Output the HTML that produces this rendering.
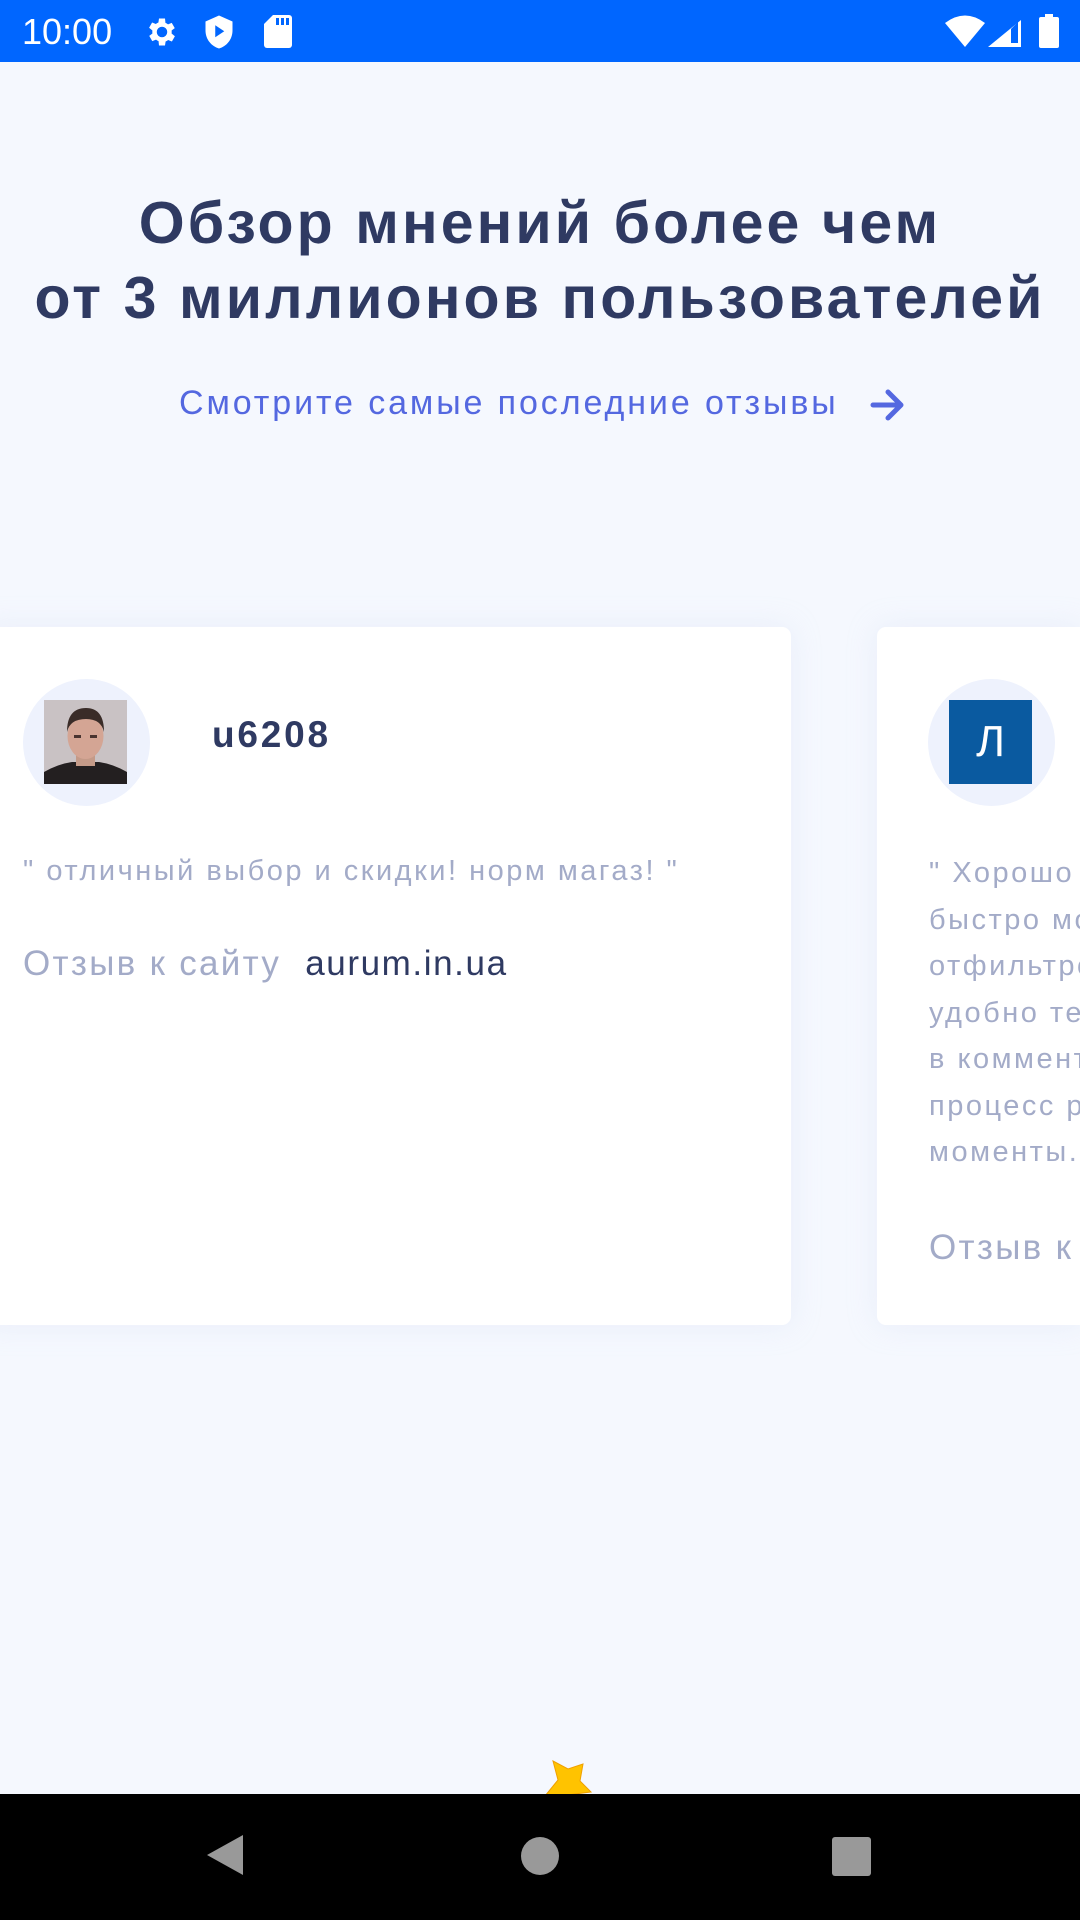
<!DOCTYPE html>
<html><head><meta charset="utf-8"><style>
*{margin:0;padding:0;box-sizing:border-box}
body{width:1080px;height:1920px;overflow:hidden;background:#f5f8fe;font-family:"Liberation Sans",sans-serif;position:relative}
.sb{position:absolute;left:0;top:0;width:1080px;height:62px;background:#0066ff;color:#fff}
.time{position:absolute;left:22px;top:11px;font-size:36px;letter-spacing:0px}
h1{position:absolute;left:0;width:1080px;top:186px;text-align:center;font-size:59px;line-height:75px;font-weight:bold;color:#2f3a62;letter-spacing:3.1px;white-space:nowrap}
.link{position:absolute;left:179px;top:384px;font-size:34px;color:#5468e0;letter-spacing:2.9px;white-space:nowrap}
.card{position:absolute;top:627px;height:698px;background:#fff;border-radius:9px;box-shadow:0 0 30px rgba(200,210,240,0.25);overflow:hidden}
.av{position:absolute;top:679px;width:127px;height:127px;border-radius:50%;background:#eef2fd}
.q{position:absolute;font-size:29px;color:#a3abc8;white-space:nowrap;letter-spacing:2.5px}
.nav{position:absolute;left:0;top:1794px;width:1080px;height:126px;background:#000}
.wrap{position:absolute;left:0;top:0;width:1080px;height:1920px;overflow:hidden}
</style></head><body>
<div class="wrap">
<div class="sb">
<div class="time">10:00</div>
<svg style="position:absolute;left:144px;top:14px" width="36" height="36" viewBox="0 0 24 24"><path fill="#fff" d="M19.4 13a7.5 7.5 0 0 0 0-2l2.1-1.6-2-3.5-2.5 1a7 7 0 0 0-1.7-1L15 3h-4l-.4 2.7a7 7 0 0 0-1.7 1l-2.5-1-2 3.5L6.6 11a7.5 7.5 0 0 0 0 2l-2.1 1.6 2 3.5 2.5-1a7 7 0 0 0 1.7 1L11 21h4l.4-2.7a7 7 0 0 0 1.7-1l2.5 1 2-3.5zM13 15.5a3.5 3.5 0 1 1 0-7 3.5 3.5 0 0 1 0 7z" transform="translate(-1 0)"/></svg>
<svg style="position:absolute;left:203px;top:14px" width="32" height="36" viewBox="0 0 20 24"><path fill="#fff" d="M10 1 1 5v6c0 6 4 10.5 9 12 5-1.5 9-6 9-12V5z"/><path fill="#0066ff" d="M7.5 7.5v8l6-4z"/></svg>
<svg style="position:absolute;left:264px;top:15px" width="28" height="33" viewBox="0 0 28 33"><path fill="#fff" d="M9 0h16a3 3 0 0 1 3 3v27a3 3 0 0 1-3 3H3a3 3 0 0 1-3-3V9z"/><rect x="12" y="3" width="3" height="7" fill="#0066ff"/><rect x="17" y="3" width="3" height="7" fill="#0066ff"/><rect x="22" y="3" width="3" height="7" fill="#0066ff"/></svg>
<svg style="position:absolute;left:945px;top:14px" width="40" height="33" viewBox="0 0 40 33"><path fill="#fff" d="M0 9Q20-6 40 9L20 33z"/></svg>
<svg style="position:absolute;left:988px;top:20px" width="33" height="27" viewBox="0 0 33 27"><path fill="#fff" d="M33 0V27H0z"/><path fill="#0066ff" d="M23 9V23h7V2z"/></svg>
<svg style="position:absolute;left:1039px;top:14px" width="20" height="34" viewBox="0 0 20 34"><rect x="6" y="0" width="8" height="4" fill="#fff"/><rect x="0" y="3" width="20" height="31" rx="2" fill="#fff"/></svg>
</div>
<h1>Обзор мнений более чем<br>от 3 миллионов пользователей</h1>
<div class="link">Смотрите самые последние отзывы</div>
<svg style="position:absolute;left:870px;top:388px" width="36" height="34" viewBox="0 0 36 34"><path d="M3 17h28M18 4l13 13-13 13" stroke="#5468e0" stroke-width="5" fill="none" stroke-linecap="round" stroke-linejoin="round"/></svg>

<div class="card" style="left:-20px;width:811px"></div>
<div class="card" style="left:877px;width:203px;border-radius:9px 0 0 9px"></div>

<div class="av" style="left:23px"></div>
<svg style="position:absolute;left:44px;top:700px" width="83" height="84" viewBox="0 0 83 84"><rect width="83" height="84" fill="#c9c2c4"/><path d="M0 84V72q14-8 28-10h27q14 2 28 10v12z" fill="#231f20"/><rect x="32" y="52" width="19" height="14" fill="#c49a88"/><ellipse cx="41.5" cy="36" rx="18" ry="23" fill="#d4a594"/><path d="M23 32q0-24 19-24 18 0 18 24-3-13-18-13-16 0-19 13z" fill="#3a2c28"/><rect x="30" y="35" width="7" height="3" fill="#4a3430"/><rect x="46" y="35" width="7" height="3" fill="#4a3430"/></svg>
<div style="position:absolute;left:212px;top:714px;font-size:37px;font-weight:bold;color:#2f3a62;letter-spacing:2.8px">u6208</div>
<div class="q" style="left:23px;top:855px">" отличный выбор и скидки! норм магаз! "</div>
<div style="position:absolute;left:23px;top:944px;font-size:35px;color:#a3abc8;white-space:nowrap;letter-spacing:2.3px">Отзыв к сайту&nbsp;&nbsp;<span style="color:#2f3a62;letter-spacing:1.6px">aurum.in.ua</span></div>

<div class="av" style="left:928px"></div>
<div style="position:absolute;left:949px;top:700px;width:83px;height:84px;background:#0a5aa0;color:#fff;font-size:44px;text-align:center;line-height:84px">Л</div>
<div class="q" style="left:929px;top:850px;line-height:46.5px">" Хорошо сайт<br>быстро можно<br>отфильтровать<br>удобно тексты<br>в комментариях<br>процесс работы<br>моменты. "</div>
<div style="position:absolute;left:929px;top:1228px;font-size:35px;color:#a3abc8;white-space:nowrap;letter-spacing:2.3px">Отзыв к сайту</div>

<svg style="position:absolute;left:543px;top:1758px" width="52" height="40" viewBox="0 0 52 40"><path d="M10 3l15 8 15-5-3 17 11 11-24 3-22 1 13-16z" fill="#ffc300" stroke="#f0a000" stroke-width="1"/></svg>
<div class="nav">
<svg style="position:absolute;left:205px;top:39px" width="40" height="44" viewBox="0 0 40 44"><path d="M38 2v40L2 22z" fill="#999"/></svg>
<div style="position:absolute;left:521px;top:43px;width:38px;height:38px;border-radius:50%;background:#999"></div>
<div style="position:absolute;left:832px;top:43px;width:39px;height:39px;border-radius:3px;background:#999"></div>
</div>
</div>
</body></html>
